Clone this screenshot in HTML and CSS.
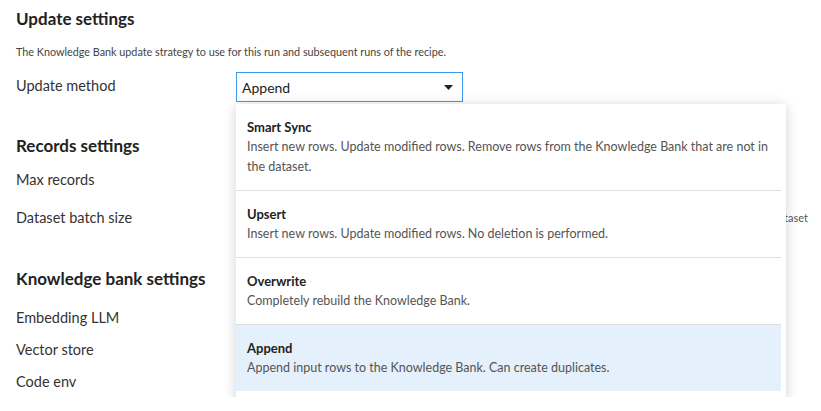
FILE: index.html
```html
<!DOCTYPE html>
<html lang="en">
<head>
<meta charset="utf-8">
<title>Update settings</title>
<link rel="stylesheet" href="styles.css">
</head>
<body>
<div class="page">
  <section class="section">
    <h2 class="section-title">Update settings</h2>
    <p class="section-desc">The Knowledge Bank update strategy to use for this run and subsequent runs of the recipe.</p>
    <div class="row row-select">
      <label class="label">Update method</label>
      <div class="select-wrap">
        <div class="select">
          <span class="select-value">Append</span>
          <svg class="caret" width="9" height="5" viewBox="0 0 9 5"><path d="M0 0 H9 L4.5 5 Z" fill="#222"/></svg>
        </div>
        <ul class="menu">
          <li class="menu-item">
            <div class="item-title">Smart Sync</div>
            <div class="item-desc">Insert new rows. Update modified rows. Remove rows from the Knowledge Bank that are not in<br>the dataset.</div>
          </li>
          <li class="menu-item">
            <div class="item-title">Upsert</div>
            <div class="item-desc">Insert new rows. Update modified rows. No deletion is performed.</div>
          </li>
          <li class="menu-item">
            <div class="item-title">Overwrite</div>
            <div class="item-desc">Completely rebuild the Knowledge Bank.</div>
          </li>
          <li class="menu-item selected">
            <div class="item-title">Append</div>
            <div class="item-desc">Append input rows to the Knowledge Bank. Can create duplicates.</div>
          </li>
        </ul>
      </div>
    </div>
  </section>

  <section class="section records">
    <h2 class="section-title">Records settings</h2>
    <div class="row row-tall"><label class="label">Max records</label></div>
    <div class="row row-tall row-batch">
      <label class="label">Dataset batch size</label>
      <span class="hint">Number of rows read at once from the input dataset</span>
    </div>
  </section>

  <section class="section kb">
    <h2 class="section-title">Knowledge bank settings</h2>
    <div class="row row-short"><label class="label">Embedding LLM</label></div>
    <div class="row row-short"><label class="label">Vector store</label></div>
    <div class="row row-short"><label class="label">Code env</label></div>
  </section>
</div>
</body>
</html>
```

FILE: styles.css
```css
* { box-sizing: border-box; }
html, body { margin: 0; padding: 0; background: #fff; }
body {
  font-family: "Lato", "Noto Sans", sans-serif;
  color: #333;
  overflow: hidden;
}
.page {
  padding: 7px 13px 0 16px;
}
.section-title {
  margin: 0;
  font-size: 17px;
  line-height: 24px;
  font-weight: 700;
  color: #222;
}
.section-desc {
  margin: 13px 0 0;
  font-size: 10.8px;
  line-height: 16px;
  color: #444;
}
.row {
  display: flex;
  align-items: center;
}
.label {
  width: 220px;
  flex: none;
  font-size: 14.5px;
  color: #333;
}
.row-select {
  margin-top: 12px;
  height: 30px;
}
.row-select .label { padding-bottom: 4px; }
.select-wrap {
  position: relative;
  z-index: 2;
}
.select {
  width: 227px;
  height: 30px;
  border: 1px solid #3d97ef;
  display: flex;
  align-items: center;
  justify-content: space-between;
  padding: 0 9px 0 5px;
  font-size: 14px;
  color: #222;
  background: #fff;
}
.caret { display: block; margin-top: 1px; }
.menu {
  position: absolute;
  top: calc(100% + 2px);
  left: 0;
  width: 550px;
  margin: 0;
  padding: 0 5px 11px 0;
  list-style: none;
  background: #fff;
  box-shadow: 0 2px 12px rgba(0, 0, 0, 0.18);
}
.menu-item {
  padding: 13px 11px 13px;
  border-bottom: 1px solid #dedede;
}
.menu-item.selected {
  background: #e4f0fb;
  border-bottom: none;
}
.item-title {
  font-size: 13px;
  line-height: 20px;
  font-weight: 700;
  color: #222;
}
.item-desc {
  font-size: 12.5px;
  line-height: 20px;
  color: #555;
}
.records { margin-top: 32px; }
.row-tall { height: 37px; }
.records .row-tall:first-of-type { margin-top: 3px; }
.row-batch { margin-top: 1px; }
.hint {
  margin-left: auto;
  font-size: 11px;
  color: #555;
}
.kb { margin-top: 31px; }
.kb .section-title { margin-bottom: 10px; }
.row-short { height: 32px; }
```
